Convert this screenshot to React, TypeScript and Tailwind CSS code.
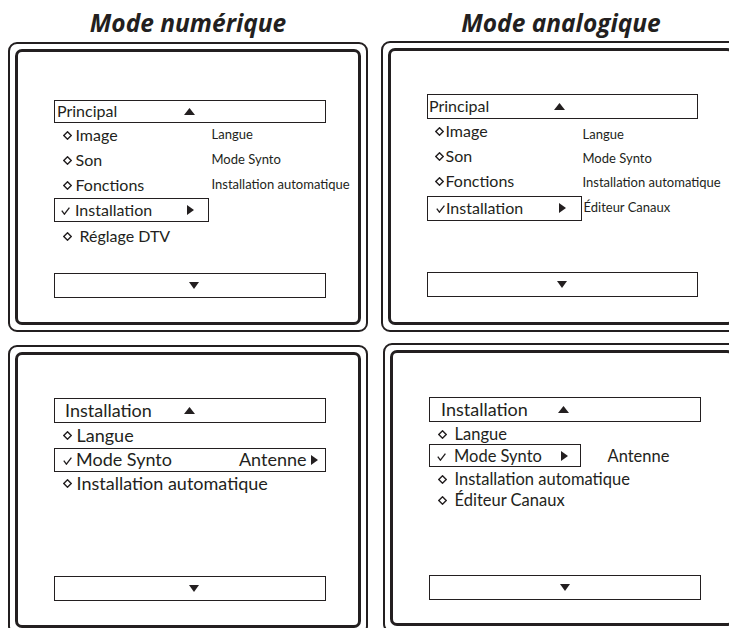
import type { ReactNode } from "react";

// petites icônes du menu TV
function Diamond() {
  return (
    <svg width="9" height="9" viewBox="0 0 9 9" className="shrink-0">
      <path d="M4.5 0.8 L8.2 4.5 L4.5 8.2 L0.8 4.5 Z" fill="none" stroke="#231f20" strokeWidth="1.4" />
    </svg>
  );
}

function Check() {
  return (
    <svg width="9" height="8" viewBox="0 0 9 8" className="mt-[2px] shrink-0">
      <path d="M0.8 3.6 L3.4 7.2 L8.4 0.6" fill="none" stroke="#231f20" strokeWidth="1.3" />
    </svg>
  );
}

function TriUp() {
  return (
    <svg width="11" height="7" viewBox="0 0 11 7" className="shrink-0">
      <path d="M5.5 0 L11 7 L0 7 Z" fill="#231f20" />
    </svg>
  );
}

function TriDown() {
  return (
    <svg width="10" height="7" viewBox="0 0 10 7" className="shrink-0">
      <path d="M0 0 L10 0 L5 7 Z" fill="#231f20" />
    </svg>
  );
}

function TriRight() {
  return (
    <svg width="7" height="10" viewBox="0 0 7 10" className="shrink-0">
      <path d="M0 0 L7 5 L0 10 Z" fill="#231f20" />
    </svg>
  );
}

function Panel({ className, inner, children }: { className: string; inner: string; children: ReactNode }) {
  return (
    <div className={"rounded-[9px] border-2 border-[#231f20] p-[5px] " + className}>
      <div className={"h-full rounded-[7px] border-[3.5px] border-[#231f20] " + inner}>{children}</div>
    </div>
  );
}

export default function App() {
  return (
    <div className="h-[628px] w-[729px] overflow-hidden bg-white font-['Lato',sans-serif] text-[#231f20]">
      <div className="flex">
        {/* Mode numérique */}
        <div className="ml-[8px] w-[360px] shrink-0">
          <h2 className="h-[42px] pt-[9px] text-center font-['Open_Sans',sans-serif] text-[24.5px] leading-[28px] font-bold italic">
            Mode numérique
          </h2>

          <Panel className="h-[290px]" inner="pl-[35.5px] pt-[47.5px]">
            <div className="w-[272px] text-[16px]">
              <div className="flex h-[23px] items-center border-[1.5px] border-[#231f20] pl-[2.5px]">
                <span className="w-[127px]">Principal</span>
                <TriUp />
              </div>
              <div className="flex h-[25px] items-center">
                <div className="flex w-[158px] shrink-0 items-center gap-[4px] pl-[9px]">
                  <Diamond />
                  <span>Image</span>
                </div>
                <span className="text-[13px] whitespace-nowrap">Langue</span>
              </div>
              <div className="flex h-[25px] items-center">
                <div className="flex w-[158px] shrink-0 items-center gap-[4px] pl-[9px]">
                  <Diamond />
                  <span>Son</span>
                </div>
                <span className="text-[13px] whitespace-nowrap">Mode Synto</span>
              </div>
              <div className="flex h-[25px] items-center">
                <div className="flex w-[158px] shrink-0 items-center gap-[4px] pl-[9px]">
                  <Diamond />
                  <span>Fonctions</span>
                </div>
                <span className="text-[13px] whitespace-nowrap">Installation automatique</span>
              </div>
              <div className="flex h-[24px] w-[155px] items-center border-[1.5px] border-[#231f20] pl-[6.5px] pr-[13.5px]">
                <Check />
                <span className="ml-[5px]">Installation</span>
                <span className="ml-auto">
                  <TriRight />
                </span>
              </div>
              <div className="mt-[2px] flex h-[25px] items-center gap-[8px] pl-[9px]">
                <Diamond />
                <span>Réglage DTV</span>
              </div>
              <div className="mt-[24px] flex h-[25px] items-center border-[1.5px] border-[#231f20] pl-[134px]">
                <TriDown />
              </div>
            </div>
          </Panel>

          <Panel className="mt-[13px] h-[290px]" inner="pl-[35.5px] pt-[42.5px]">
            <div className="w-[272px] text-[18px]">
              <div className="flex h-[25px] items-center border-[1.5px] border-[#231f20] pl-[10.5px]">
                <span className="w-[119px]">Installation</span>
                <TriUp />
              </div>
              <div className="flex h-[25px] items-center gap-[5px] pl-[9px]">
                <Diamond />
                <span>Langue</span>
              </div>
              <div className="flex h-[24px] items-center border-[1.5px] border-[#231f20] pl-[8.5px] pr-[7px]">
                <Check />
                <span className="ml-[4px]">Mode Synto</span>
                <span className="ml-auto">Antenne</span>
                <span className="ml-[4px]">
                  <TriRight />
                </span>
              </div>
              <div className="flex h-[24px] items-center gap-[5px] pl-[9px]">
                <Diamond />
                <span className="whitespace-nowrap">Installation automatique</span>
              </div>
              <div className="mt-[80px] flex h-[25px] items-center border-[1.5px] border-[#231f20] pl-[134px]">
                <TriDown />
              </div>
            </div>
          </Panel>
        </div>

        {/* Mode analogique */}
        <div className="ml-[13px] w-[360px] shrink-0">
          <h2 className="h-[41px] pt-[9px] text-center font-['Open_Sans',sans-serif] text-[24.5px] leading-[28px] font-bold italic">
            Mode analogique
          </h2>

          <Panel className="h-[291px]" inner="pl-[35.5px] pt-[42.5px]">
            <div className="w-[271px] text-[16px]">
              <div className="flex h-[25px] items-center border-[1.5px] border-[#231f20] pl-[1.5px]">
                <span className="w-[125px]">Principal</span>
                <TriUp />
              </div>
              <div className="flex h-[25px] items-center">
                <div className="flex w-[156px] shrink-0 items-center gap-[2px] pl-[8px]">
                  <Diamond />
                  <span>Image</span>
                </div>
                <span className="pt-[7px] text-[13px] whitespace-nowrap">Langue</span>
              </div>
              <div className="flex h-[25px] items-center">
                <div className="flex w-[156px] shrink-0 items-center gap-[2px] pl-[8px]">
                  <Diamond />
                  <span>Son</span>
                </div>
                <span className="pt-[5px] text-[13px] whitespace-nowrap">Mode Synto</span>
              </div>
              <div className="flex h-[25px] items-center">
                <div className="flex w-[156px] shrink-0 items-center gap-[2px] pl-[8px]">
                  <Diamond />
                  <span>Fonctions</span>
                </div>
                <span className="pt-[3px] text-[13px] whitespace-nowrap">Installation automatique</span>
              </div>
              <div className="mt-[2px] flex items-center">
                <div className="flex h-[25px] w-[155px] shrink-0 items-center border-[1.5px] border-[#231f20] pl-[8.5px] pr-[14.5px]">
                  <Check />
                  <span className="ml-[1px]">Installation</span>
                  <span className="ml-auto">
                    <TriRight />
                  </span>
                </div>
                <span className="ml-[2px] text-[13px] whitespace-nowrap">Éditeur Canaux</span>
              </div>
              <div className="mt-[51px] flex h-[25px] items-center justify-center border-[1.5px] border-[#231f20]">
                <TriDown />
              </div>
            </div>
          </Panel>

          <Panel className="ml-[2px] mt-[11px] h-[290px]" inner="pl-[35.5px] pt-[43.5px]">
            <div className="w-[272px] text-[16.5px]">
              <div className="flex h-[25px] items-center border-[1.5px] border-[#231f20] pl-[11.5px] text-[18px]">
                <span className="w-[117px]">Installation</span>
                <TriUp />
              </div>
              <div className="flex h-[22px] items-center gap-[8px] pl-[9px] pt-[4px]">
                <Diamond />
                <span>Langue</span>
              </div>
              <div className="flex items-center">
                <div className="flex h-[23px] w-[152px] shrink-0 items-center border-[1.5px] border-[#231f20] pl-[7.5px] pr-[11.5px]">
                  <Check />
                  <span className="ml-[8px] whitespace-nowrap">Mode Synto</span>
                  <span className="ml-auto">
                    <TriRight />
                  </span>
                </div>
                <span className="ml-[27px]">Antenne</span>
              </div>
              <div className="flex h-[22px] items-center gap-[8px] pl-[9px]">
                <Diamond />
                <span className="whitespace-nowrap">Installation automatique</span>
              </div>
              <div className="flex h-[21px] items-center gap-[8px] pl-[9px]">
                <Diamond />
                <span>Éditeur Canaux</span>
              </div>
              <div className="mt-[64px] flex h-[25px] items-center justify-center border-[1.5px] border-[#231f20]">
                <TriDown />
              </div>
            </div>
          </Panel>
        </div>
      </div>
    </div>
  );
}
